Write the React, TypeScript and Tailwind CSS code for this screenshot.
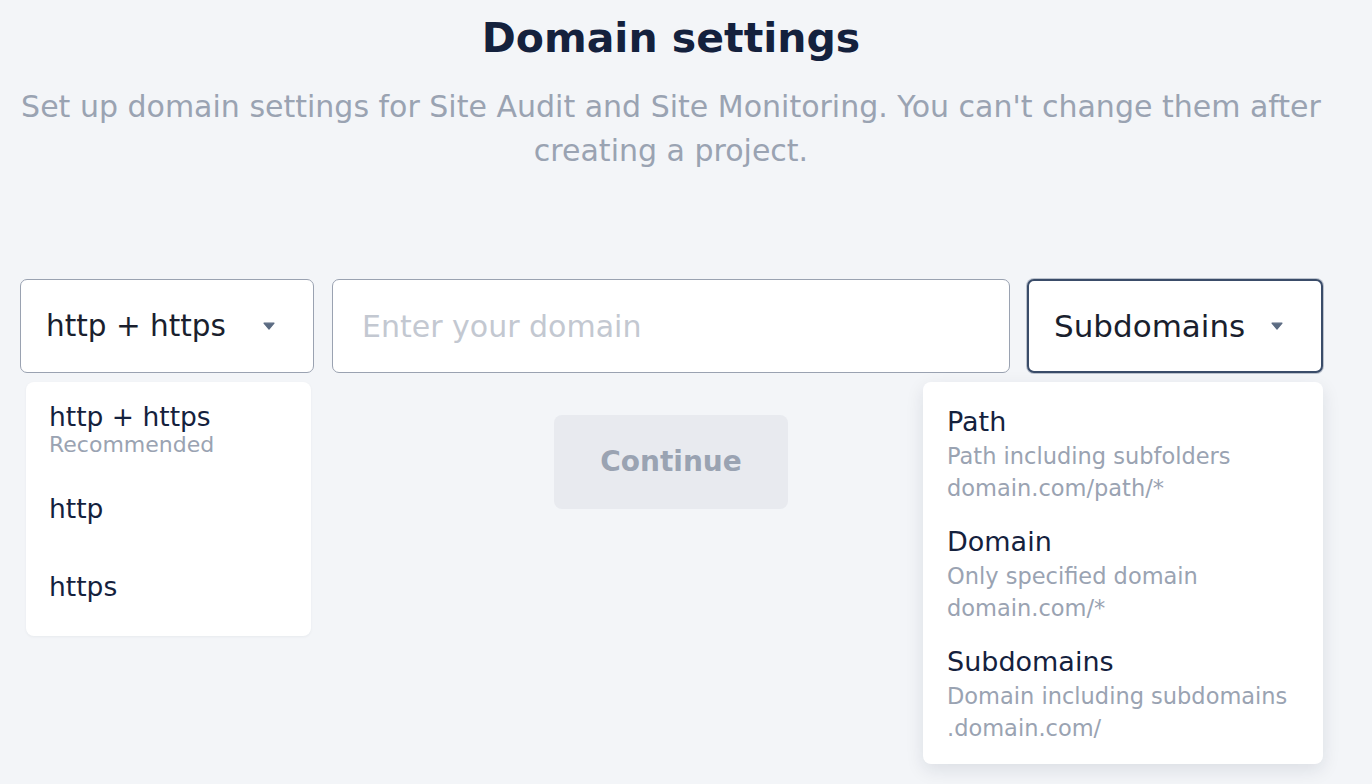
import React from "react";

const font = { fontFamily: "'DejaVu Sans', 'Noto Sans', sans-serif" };

function Caret() {
  return (
    <svg width="12" height="8" viewBox="0 0 12 8" className="shrink-0">
      <path d="M1 1.2h10L6 7z" fill="#5b6b82" stroke="#5b6b82" strokeWidth="1.2" strokeLinejoin="round" />
    </svg>
  );
}

const protocols = [
  { label: "http + https", hint: "Recommended" },
  { label: "http" },
  { label: "https" },
];

const scopes = [
  { label: "Path", lines: ["Path including subfolders", "domain.com/path/*"] },
  { label: "Domain", lines: ["Only specified domain", "domain.com/*"] },
  { label: "Subdomains", lines: ["Domain including subdomains", ".domain.com/"] },
];

export default function App() {
  return (
    <div className="min-h-screen w-full bg-[#f3f5f8]" style={font}>
      <header className="pr-[30px] text-center">
        <h1 className="pt-[10px] text-[41px] font-bold leading-[56px] text-[#14213d]">Domain settings</h1>
        <p className="mt-[19px] text-[30px] leading-[44px] text-[#9aa3b2]">
          Set up domain settings for Site Audit and Site Monitoring. You can't change them after
          <br />
          creating a project.
        </p>
      </header>

      <div className="mt-[106px] flex items-start pl-[20px]">
        {/* protocol select */}
        <div className="relative w-[294px]">
          <button className="flex h-[94px] w-full items-center justify-between rounded-[7px] border-[1.5px] border-[#9aa2b1] bg-white pl-[25px] pr-[38px] text-[29.5px] text-[#1a1f2e]">
            <span>http + https</span>
            <Caret />
          </button>
          <div className="absolute left-[6px] top-full z-10 mt-[9px] w-[285px] rounded-[8px] bg-white py-[10px] shadow-[0_1px_3px_rgba(20,33,61,0.05)]">
            {protocols.map((p) => (
              <div key={p.label} className="flex h-[78px] flex-col justify-center pl-[23px]">
                <span className="text-[26.5px] leading-[28px] text-[#14213d]">{p.label}</span>
                {p.hint && <span className="text-[22px] leading-[28px] text-[#9aa3b2]">{p.hint}</span>}
              </div>
            ))}
          </div>
        </div>

        {/* domain input + continue */}
        <div className="ml-[18px] flex w-[678px] flex-col items-center">
          <input
            placeholder="Enter your domain"
            className="h-[94px] w-full rounded-[7px] border-[1.5px] border-[#9aa2b1] bg-white px-[29px] text-[30px] text-[#1a1f2e] outline-none placeholder:text-[#c3c8d1]"
          />
          <button className="mt-[42px] h-[94px] w-[234px] rounded-[8px] bg-[#e8eaef] text-[28px] font-semibold text-[#9aa3b2]">
            Continue
          </button>
        </div>

        {/* scope select */}
        <div className="relative ml-[17px] w-[296px]">
          <button className="flex h-[94px] w-full items-center justify-between rounded-[7px] border-2 border-[#3a4c69] bg-white pl-[25px] pr-[38px] text-[31px] text-[#1a1f2e] shadow-[0_0_0_1px_rgba(58,76,105,0.3)]">
            <span>Subdomains</span>
            <Caret />
          </button>
          <div className="absolute right-0 top-full z-10 mt-[9px] w-[400px] rounded-[8px] bg-white pb-[20px] pl-[24px] pt-[22px] shadow-[0_6px_18px_rgba(20,33,61,0.10)]">
            <div className="flex flex-col gap-[20px]">
              {scopes.map((s) => (
                <div key={s.label} className="flex flex-col">
                  <span className="text-[27px] leading-[36px] text-[#14213d]">{s.label}</span>
                  {s.lines.map((l) => (
                    <span key={l} className="text-[22.5px] leading-[32px] text-[#9aa3b2]">
                      {l}
                    </span>
                  ))}
                </div>
              ))}
            </div>
          </div>
        </div>
      </div>
    </div>
  );
}
